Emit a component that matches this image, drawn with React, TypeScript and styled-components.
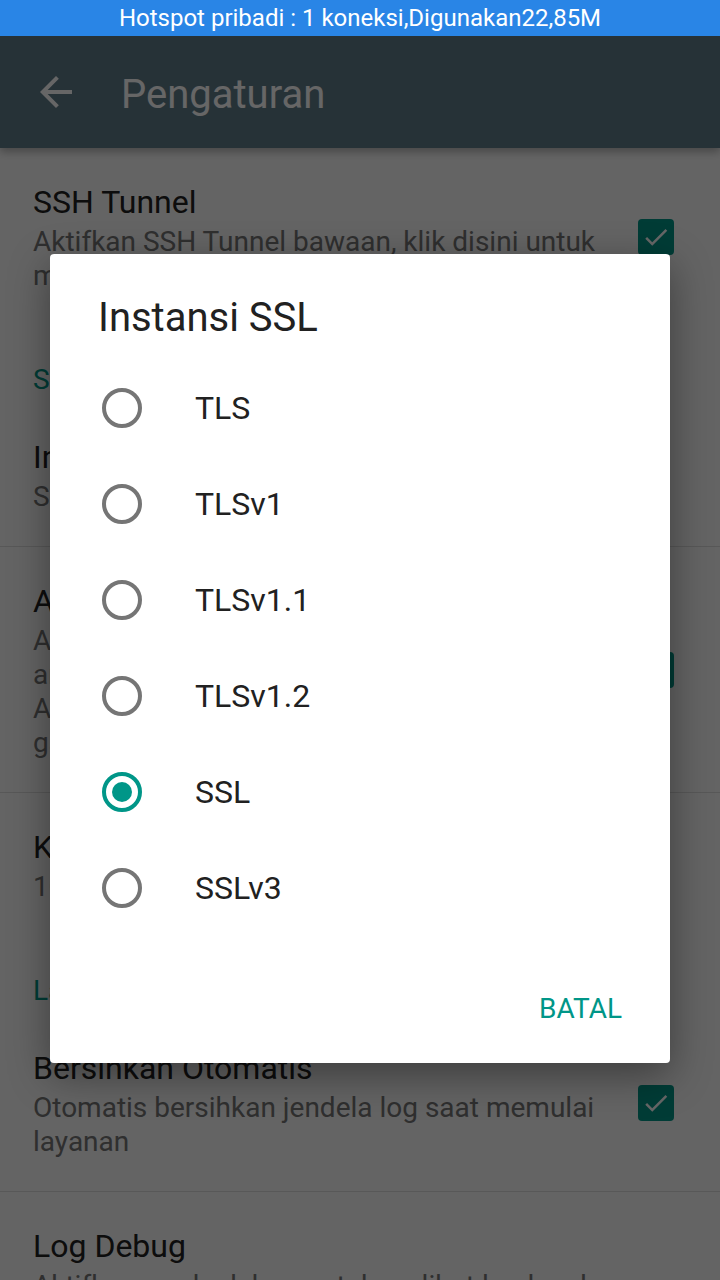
import React, { useState } from "react";
import styled, { createGlobalStyle } from "styled-components";

const GlobalStyle = createGlobalStyle`
  html, body {
    margin: 0;
    padding: 0;
    width: 720px;
    height: 1280px;
    overflow: hidden;
    background: #fafafa;
    font-family: Roboto, "Noto Sans", "Liberation Sans", sans-serif;
  }
  #root {
    height: 100%;
  }
`;

const Phone = styled.div`
  width: 720px;
  height: 1280px;
  display: flex;
  flex-direction: column;
  overflow: hidden;
`;

const StatusBar = styled.div`
  height: 36px;
  flex-shrink: 0;
  background: #2985e6;
  color: #fff;
  font-size: 24px;
  display: flex;
  align-items: center;
  justify-content: center;
`;

const Screen = styled.div`
  position: relative;
  flex: 1;
  display: flex;
  flex-direction: column;
  background: #fafafa;
  overflow: hidden;
`;

const Toolbar = styled.header`
  position: relative;
  z-index: 1;
  height: 112px;
  flex-shrink: 0;
  background: #607d8b;
  display: flex;
  align-items: center;
  padding-left: 32px;
  box-shadow: 0 4px 8px rgba(0, 0, 0, 0.28);
  svg {
    display: block;
  }
`;

const ToolbarTitle = styled.h1`
  margin: 4px 0 0 41px;
  font-size: 40px;
  font-weight: 400;
  color: #fff;
`;

const PrefList = styled.div`
  display: flex;
  flex-direction: column;
`;

const Category = styled.div`
  padding: 38px 33px 6px;
  font-size: 28px;
  line-height: 34px;
  color: #009688;
`;

const PrefItem = styled.div<{ $divider?: boolean }>`
  display: flex;
  align-items: center;
  padding: 33px 46px 32px 33px;
  border-bottom: ${({ $divider }) =>
    $divider ? "1px solid rgba(0, 0, 0, 0.12)" : "none"};
`;

const PrefText = styled.div`
  flex: 1;
  min-width: 0;
  margin-right: 32px;
`;

const PrefTitle = styled.div`
  font-size: 32px;
  line-height: 42px;
  color: #212121;
`;

const PrefSummary = styled.div`
  margin-top: 2px;
  font-size: 28px;
  line-height: 34px;
  color: #757575;
`;

const CheckBox = styled.span`
  width: 36px;
  height: 36px;
  flex-shrink: 0;
  border-radius: 4px;
  background: #009688;
  display: flex;
  align-items: center;
  justify-content: center;
`;

const Scrim = styled.div`
  position: absolute;
  inset: 0;
  z-index: 2;
  background: rgba(0, 0, 0, 0.6);
  display: flex;
  align-items: center;
  justify-content: center;
`;

const Dialog = styled.div`
  width: 620px;
  background: #fff;
  border-radius: 4px;
  box-shadow: 0 12px 40px rgba(0, 0, 0, 0.4);
  padding-top: 40px;
  display: flex;
  flex-direction: column;
`;

const DialogTitle = styled.h2`
  margin: 0 48px 18px;
  font-size: 40px;
  line-height: 48px;
  font-weight: 400;
  color: #212121;
`;

const Option = styled.label`
  height: 96px;
  display: flex;
  align-items: center;
  gap: 53px;
  padding-left: 52px;
  cursor: pointer;
`;

const Radio = styled.span<{ $checked: boolean }>`
  box-sizing: border-box;
  width: 40px;
  height: 40px;
  border-radius: 50%;
  border: 4px solid ${({ $checked }) => ($checked ? "#009688" : "#757575")};
  display: flex;
  align-items: center;
  justify-content: center;
  &::after {
    content: "";
    width: 20px;
    height: 20px;
    border-radius: 50%;
    background: #009688;
    display: ${({ $checked }) => ($checked ? "block" : "none")};
  }
`;

const OptionLabel = styled.span`
  font-size: 32px;
  color: #212121;
`;

const Actions = styled.div`
  display: flex;
  justify-content: flex-end;
  padding: 37px 32px 18px;
`;

const TextButton = styled.button`
  height: 72px;
  padding: 0 16px;
  border: none;
  background: none;
  font-family: inherit;
  font-size: 28px;
  color: #009688;
  text-transform: uppercase;
  cursor: pointer;
`;

const Check = () => (
  <CheckBox>
    <svg width="30" height="30" viewBox="0 0 24 24">
      <path
        d="M9 16.17L4.83 12l-1.42 1.41L9 19 21 7l-1.41-1.41z"
        fill="#fff"
      />
    </svg>
  </CheckBox>
);

const BackArrow = () => (
  <svg width="48" height="48" viewBox="0 0 24 24">
    <path
      d="M20 11H7.83l5.59-5.59L12 4l-8 8 8 8 1.41-1.41L7.83 13H20v-2z"
      fill="#fff"
    />
  </svg>
);

const options = ["TLS", "TLSv1", "TLSv1.1", "TLSv1.2", "SSL", "SSLv3"];

export default function App() {
  const [selected, setSelected] = useState("SSL");

  return (
    <Phone>
      <GlobalStyle />
      <StatusBar>Hotspot pribadi : 1 koneksi,Digunakan22,85M</StatusBar>
      <Screen>
        <Toolbar>
          <BackArrow />
          <ToolbarTitle>Pengaturan</ToolbarTitle>
        </Toolbar>
        <PrefList>
          <PrefItem>
            <PrefText>
              <PrefTitle>SSH Tunnel</PrefTitle>
              <PrefSummary>
                Aktifkan SSH Tunnel bawaan, klik disini untuk mengatur server
              </PrefSummary>
            </PrefText>
            <Check />
          </PrefItem>
          <Category>SSL</Category>
          <PrefItem $divider>
            <PrefText>
              <PrefTitle>Instansi SSL</PrefTitle>
              <PrefSummary>SSL</PrefSummary>
            </PrefText>
          </PrefItem>
          <PrefItem $divider>
            <PrefText>
              <PrefTitle>Atur Renegosiasi</PrefTitle>
              <PrefSummary>
                Aktifkan renegosiasi tak aman,
                <br />
                artinya koneksi dipulihkan.
                <br />
                Aktifkan jika sering putus
                <br />
                gagal terhubung.
              </PrefSummary>
            </PrefText>
            <Check />
          </PrefItem>
          <PrefItem>
            <PrefText>
              <PrefTitle>Kirim Keep-Alive</PrefTitle>
              <PrefSummary>10 detik</PrefSummary>
            </PrefText>
          </PrefItem>
          <Category>Laporan</Category>
          <PrefItem $divider>
            <PrefText>
              <PrefTitle>Bersihkan Otomatis</PrefTitle>
              <PrefSummary>
                Otomatis bersihkan jendela log saat memulai layanan
              </PrefSummary>
            </PrefText>
            <Check />
          </PrefItem>
          <PrefItem>
            <PrefText>
              <PrefTitle>Log Debug</PrefTitle>
              <PrefSummary>
                Aktifkan mode debug untuk melihat log lengkap
              </PrefSummary>
            </PrefText>
          </PrefItem>
        </PrefList>

        <Scrim>
          <Dialog>
            <DialogTitle>Instansi SSL</DialogTitle>
            {options.map((opt) => (
              <Option key={opt} onClick={() => setSelected(opt)}>
                <Radio $checked={opt === selected} />
                <OptionLabel>{opt}</OptionLabel>
              </Option>
            ))}
            <Actions>
              <TextButton>Batal</TextButton>
            </Actions>
          </Dialog>
        </Scrim>
      </Screen>
    </Phone>
  );
}
